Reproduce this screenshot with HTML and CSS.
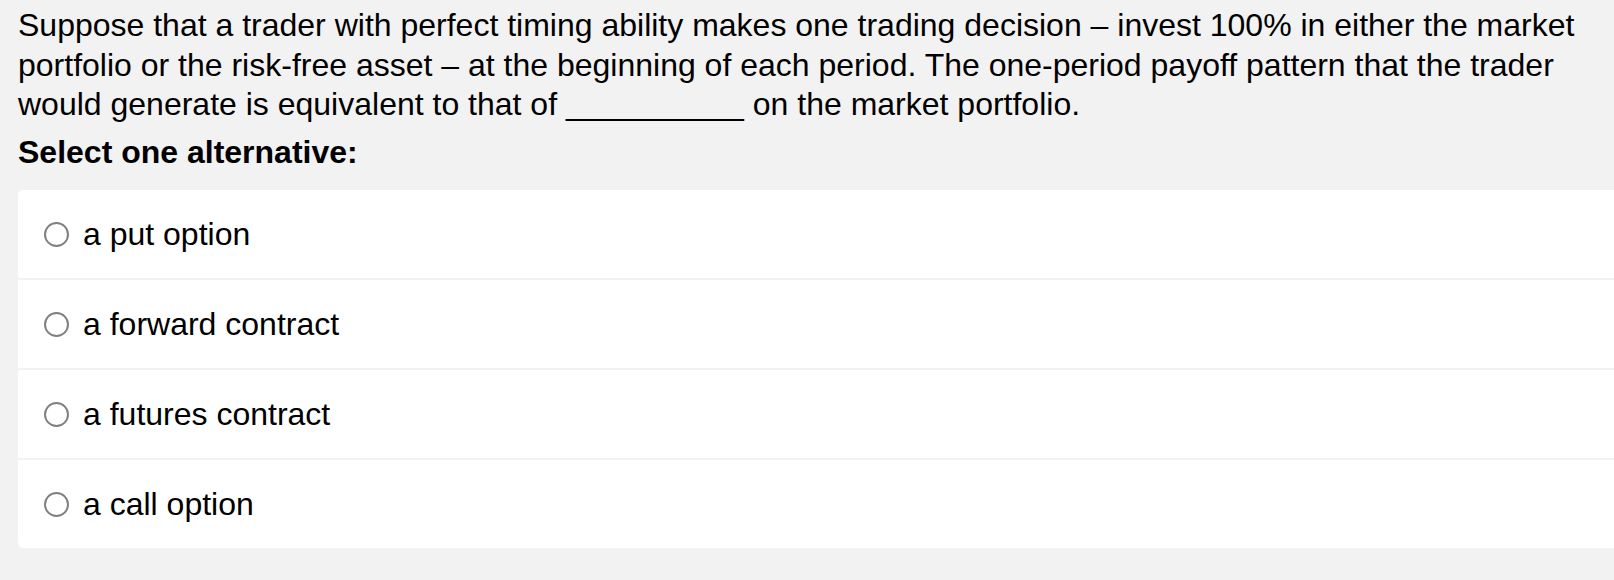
FILE: index.html
```html
<!DOCTYPE html>
<html>
<head>
<meta charset="utf-8">
<link rel="stylesheet" href="styles.css">
</head>
<body>
<div class="page">
  <p class="question">Suppose that a trader with perfect timing ability makes one trading decision – invest 100% in either the market portfolio or the risk-free asset – at the beginning of each period. The one-period payoff pattern that the trader would generate is equivalent to that of __________ on the market portfolio.</p>
  <p class="prompt">Select one alternative:</p>
  <div class="card">
    <label class="option"><span class="radio"></span><span class="label">a put option</span></label>
    <label class="option"><span class="radio"></span><span class="label">a forward contract</span></label>
    <label class="option"><span class="radio"></span><span class="label">a futures contract</span></label>
    <label class="option"><span class="radio"></span><span class="label">a call option</span></label>
  </div>
</div>
</body>
</html>
```

FILE: styles.css
```css
html, body {
  margin: 0;
  padding: 0;
  background: #f2f2f2;
}
.page {
  padding: 6px 0 0 18px;
  font-family: "Liberation Sans", Arial, sans-serif;
  color: #000;
}
.question {
  margin: 0;
  font-size: 32px;
  line-height: 39.5px;
  padding-right: 10px;
}
.prompt {
  margin: 7.5px 0 18px 0;
  font-size: 32px;
  line-height: 40px;
  font-weight: bold;
}
.card {
  background: #fff;
  border-radius: 5px 0 0 5px;
  display: flex;
  flex-direction: column;
}
.option {
  display: flex;
  align-items: center;
  height: 88px;
  padding-left: 26px;
  border-top: 2px solid #f2f2f2;
}
.option:first-child {
  border-top: none;
}
.radio {
  width: 21px;
  height: 21px;
  border: 2px solid #808080;
  border-radius: 50%;
  box-sizing: content-box;
  flex: none;
}
.label {
  margin-left: 14px;
  font-size: 32px;
}
```
